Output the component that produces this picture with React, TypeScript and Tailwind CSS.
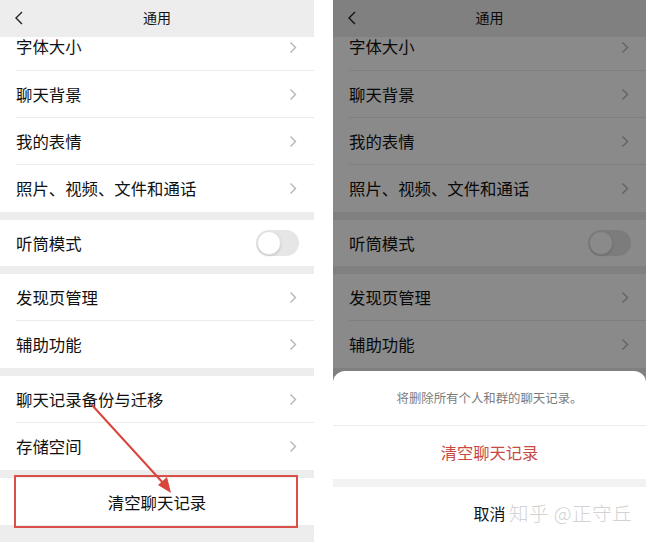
import React from 'react'

const Chevron = () => (
  <svg width="8" height="13" viewBox="0 0 8 13" className="shrink-0">
    <path d="M1.5 1.5 L6.5 6.5 L1.5 11.5" fill="none" stroke="#b4b4b4" strokeWidth="1.4" />
  </svg>
)

function Row({ label, last = false, first = false }: { label: string; last?: boolean; first?: boolean }) {
  return (
    <div className={`bg-white pl-4 ${first ? 'h-[34px]' : 'h-[47px]'}`}>
      <div
        className={`flex h-full justify-between pr-[17px] ${first ? 'items-start' : 'items-center'} ${
          last ? '' : 'border-b border-[#ebebeb]'
        }`}
      >
        <span className={`text-[16.4px] leading-[22px] text-[#111] ${first ? '-mt-[2px]' : '-mt-px'}`}>{label}</span>
        <span className={first ? 'mt-[4px]' : ''}>
          <Chevron />
        </span>
      </div>
    </div>
  )
}

const Gap = () => <div className="h-[8px] bg-[#ededed]" />

function SettingsPanel({ width, covered = false }: { width: string; covered?: boolean }) {
  return (
    <div className={`flex h-full flex-col bg-[#ededed] ${width}`}>
      <div className="relative flex h-[37px] items-center justify-center bg-[#ededed] pb-[3px]">
        <svg width="10" height="14" viewBox="0 0 10 14" className="absolute left-[14px] top-[11px]">
          <path d="M8 1 L2 7 L8 13" fill="none" stroke="#222" strokeWidth="1.4" />
        </svg>
        <span className="text-[14px] leading-none text-[#111]">通用</span>
      </div>

      <Row label="字体大小" first />
      <Row label="聊天背景" />
      <Row label="我的表情" />
      <Row label="照片、视频、文件和通话" last />
      <Gap />

      <div className="flex h-[46px] items-center justify-between bg-white pl-4 pr-[15px]">
        <span className="-mt-px text-[16.4px] leading-[22px] text-[#111]">听筒模式</span>
        <div className="flex h-[26px] w-[43px] items-center rounded-full bg-[#e6e6e6] p-px">
          <div className="h-[24px] w-[24px] rounded-full border border-[#e0e0e0] bg-white shadow-[0_1px_2px_rgba(0,0,0,0.15)]" />
        </div>
      </div>
      <Gap />

      <Row label="发现页管理" />
      <Row label="辅助功能" last />
      <Gap />

      {covered ? (
        <div className="h-[102px] bg-white" />
      ) : (
        <>
          <Row label="聊天记录备份与迁移" />
          <Row label="存储空间" last />
          <Gap />
          <div className="flex h-[47px] items-center justify-center bg-white">
            <span className="text-[16.4px] leading-[22px] text-[#111]">清空聊天记录</span>
          </div>
        </>
      )}
      <div className="flex-1 bg-[#ededed]" />
    </div>
  )
}

export default function App() {
  return (
    <div className="relative flex h-[542px] w-[648px] overflow-hidden bg-white font-['Noto_Sans_CJK_SC','Noto_Sans',sans-serif]">
      {/* left: settings page with annotation */}
      <div className="relative h-full">
        <SettingsPanel width="w-[314px]" />
        <div className="absolute left-[14px] top-[475px] h-[53px] w-[284px] border-[2.5px] border-[#d9504a]" />
        <svg className="absolute left-0 top-0" width="314" height="542" viewBox="0 0 314 542">
          <line x1="91" y1="404" x2="164" y2="484" stroke="#d8453b" strokeWidth="2" />
          <polygon points="171,493 158,485 167,477" fill="#d8453b" />
        </svg>
      </div>

      <div className="w-[19px] bg-white" />

      {/* right: same page with action sheet */}
      <div className="relative h-full w-[313px] overflow-hidden">
        <SettingsPanel width="w-[313px]" covered />
        <div className="absolute inset-0 bg-black/[0.46]" />
        <div className="absolute inset-x-0 bottom-0 top-[371px] flex flex-col rounded-t-[12px] bg-white">
          <div className="flex h-[55px] items-center justify-center border-b border-[#ececec]">
            <span className="text-[12.4px] leading-none text-[#7c7c7c]">将删除所有个人和群的聊天记录。</span>
          </div>
          <div className="flex h-[53px] items-center justify-center">
            <span className="text-[16.3px] leading-none text-[#c94a44]">清空聊天记录</span>
          </div>
          <div className="h-[8px] bg-[#f2f2f2]" />
          <div className="flex flex-1 items-center justify-center pb-[4px]">
            <span className="text-[16px] leading-none text-[#111]">取消</span>
          </div>
        </div>
      </div>

      {/* watermark */}
      <div className="absolute left-[509px] top-[503px] text-[19.5px] font-light leading-none tracking-[0.5px] text-[#d2d2d2]">
        知乎 @正守丘
      </div>
    </div>
  )
}
